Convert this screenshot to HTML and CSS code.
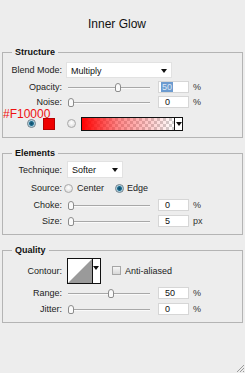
FILE: index.html
```html
<!DOCTYPE html>
<html lang="en">
<head>
    <meta charset="UTF-8">
    <title>Inner Glow</title>
    <link rel="stylesheet" href="styles.css">
</head>
<body>
    <div class="title">Inner Glow</div>

    <fieldset class="group structure">
        <legend>Structure</legend>
        <div class="row r-blend">
            <span class="lbl">Blend Mode:</span>
            <div class="select blend">Multiply<span class="arrow"></span></div>
        </div>
        <div class="row r-opacity">
            <span class="lbl">Opacity:</span>
            <div class="slider"><span class="thumb" style="left:47px"></span></div>
            <div class="num"><span class="hl">50</span></div>
            <span class="unit">%</span>
        </div>
        <div class="row r-noise">
            <span class="lbl">Noise:</span>
            <div class="slider"><span class="thumb" style="left:0px"></span></div>
            <div class="num">0</div>
            <span class="unit">%</span>
        </div>
        <div class="row r-color">
            <span class="radio on first"></span>
            <span class="swatch"></span>
            <span class="radio second"></span>
            <span class="gradient"></span><span class="drop"><span class="arrow"></span></span>
        </div>
    </fieldset>

    <fieldset class="group elements">
        <legend>Elements</legend>
        <div class="row r-tech">
            <span class="lbl">Technique:</span>
            <div class="select tech">Softer<span class="arrow"></span></div>
        </div>
        <div class="row r-source">
            <span class="lbl">Source:</span>
            <span class="radio src1"></span><span class="opt">Center</span>
            <span class="radio on src2"></span><span class="opt edge">Edge</span>
        </div>
        <div class="row r-choke">
            <span class="lbl">Choke:</span>
            <div class="slider"><span class="thumb" style="left:0px"></span></div>
            <div class="num">0</div>
            <span class="unit">%</span>
        </div>
        <div class="row r-size">
            <span class="lbl">Size:</span>
            <div class="slider"><span class="thumb" style="left:0px"></span></div>
            <div class="num">5</div>
            <span class="unit">px</span>
        </div>
    </fieldset>

    <fieldset class="group quality">
        <legend>Quality</legend>
        <div class="row r-contour">
            <span class="lbl">Contour:</span>
            <div class="contour">
                <svg width="24" height="24" viewBox="0 0 24 24"><polygon points="0,24 24,0 24,24" fill="#9a9a9a"/></svg>
                <span class="cdrop"><span class="arrow"></span></span>
            </div>
            <span class="check"></span><span class="opt">Anti-aliased</span>
        </div>
        <div class="row r-range">
            <span class="lbl">Range:</span>
            <div class="slider"><span class="thumb" style="left:40px"></span></div>
            <div class="num">50</div>
            <span class="unit">%</span>
        </div>
        <div class="row r-jitter">
            <span class="lbl">Jitter:</span>
            <div class="slider"><span class="thumb" style="left:0px"></span></div>
            <div class="num">0</div>
            <span class="unit">%</span>
        </div>
    </fieldset>

    <div class="note">#F10000</div>

    <svg class="grip" width="7" height="7" viewBox="0 0 7 7">
        <path d="M7 0 L0 7 M7 3 L3 7 M7 6 L6 7" stroke="#9a9a9a" stroke-width="1"/>
    </svg>
</body>
</html>
```

FILE: styles.css
```css
* { box-sizing: border-box; }
body {
    margin: 0;
    width: 245px;
    height: 373px;
    overflow: hidden;
    position: relative;
    background: #ededed;
    font-family: "Liberation Sans", Arial, sans-serif;
    font-size: 9px;
    color: #222;
}
.title {
    height: 47px;
    padding-top: 17px;
    padding-right: 11px;
    line-height: 14px;
    font-size: 12px;
    text-align: center;
    color: #111;
}

/* group boxes */
.group {
    margin: 0 2px;
    padding: 0;
    border: 1px solid #b4b4b4;
    min-width: 0;
}
.group legend {
    margin-left: 9px;
    padding: 0 3px;
    font-weight: bold;
    font-size: 9px;
    line-height: 10px;
    color: #111;
}
.structure { padding-bottom: 1px; }
.elements { margin-top: 10px; padding-bottom: 5px; }
.quality { margin-top: 10px; padding-bottom: 5px; }

.row {
    display: flex;
    align-items: center;
}
.lbl {
    width: 59px;
    line-height: 8px;
    text-align: right;
    flex: none;
}
.r-blend { margin-top: 4px; height: 18px; }
.r-opacity { height: 16px; }
.r-noise { height: 14px; }
.r-color { height: 27px; padding-top: 2px; }
.r-tech { margin-top: 2px; height: 19px; }
.r-source { height: 18px; }
.r-choke, .r-size { height: 16px; }
.r-contour { margin-top: 2px; height: 27px; }
.r-range { height: 17px; }
.r-jitter { height: 16px; }

/* dropdowns */
.select {
    position: relative;
    height: 16px;
    line-height: 16px;
    padding-left: 4px;
    background: #fff;
    border: 1px solid #e2e2e2;
    color: #111;
}
.select.blend { margin-left: 4px; width: 106px; }
.select.tech { margin-left: 5px; width: 56px; height: 17px; line-height: 17px; }
.arrow {
    position: absolute;
    width: 0;
    height: 0;
    border-left: 3px solid transparent;
    border-right: 3px solid transparent;
    border-top: 4px solid #111;
}
.select .arrow { right: 4px; top: 6px; }

/* sliders */
.slider {
    position: relative;
    margin-left: 6px;
    width: 82px;
    height: 10px;
    flex: none;
}
.slider::before {
    content: "";
    position: absolute;
    left: 0;
    right: 0;
    top: 5px;
    border-top: 1px solid #a8a8a8;
    border-bottom: 1px solid #fafafa;
}
.thumb {
    position: absolute;
    top: 1px;
    width: 6px;
    height: 9px;
    background: #fafafa;
    border: 1px solid #8c8c8c;
    border-radius: 3px 3px 2px 2px;
}
.num {
    margin-left: 8px;
    width: 31px;
    height: 12px;
    line-height: 10px;
    padding-left: 6px;
    background: #fff;
    border: 1px solid #d6d6d6;
    color: #111;
    flex: none;
}
.hl {
    display: inline-block;
    margin-left: -4px;
    padding: 0 1px;
    background: #6c9bd0;
    color: #dfe9f5;
}
.unit { margin-left: 4px; color: #333; }

/* radios and checks */
.radio {
    width: 9px;
    height: 9px;
    border-radius: 50%;
    border: 1px solid #a9a9a9;
    background: radial-gradient(circle at 50% 40%, #fff 0, #d6d6d6 100%);
    flex: none;
}
.radio.on {
    border-color: #6d7f8a;
    background: radial-gradient(circle, #0e4966 0, #1d6a8c 2px, #9fc8da 2.8px, #e4eef2 4px);
}
.radio.first { margin-left: 24px; }
.radio.second { margin-left: 12px; }
.radio.src1 { margin-left: 2px; }
.radio.src2 { margin-left: 11px; }
.opt { margin-left: 4px; color: #222; }
.opt.edge { margin-left: 3px; }
.check {
    margin-left: 11px;
    width: 9px;
    height: 9px;
    border: 1px solid #a6a6a6;
    background: linear-gradient(#f6f6f6, #d8d8d8);
    flex: none;
}

/* colour pickers */
.swatch {
    margin-left: 7px;
    width: 12px;
    height: 12px;
    background: #ee0000;
    border: 1px solid #b30000;
    flex: none;
}
.gradient {
    margin-left: 5px;
    width: 93px;
    height: 14px;
    border: 1px solid #111;
    border-right: none;
    background:
        linear-gradient(to right, #f00 0%, rgba(255, 40, 40, 0.55) 40%, rgba(255, 0, 0, 0) 100%),
        repeating-conic-gradient(#d0d0d0 0 25%, #fff 0 50%) 0 0 / 6px 6px;
    flex: none;
}
.drop {
    position: relative;
    width: 9px;
    height: 14px;
    background: #fff;
    border: 1px solid #111;
    flex: none;
}
.drop .arrow { left: 1px; top: 4px; }

/* contour */
.contour {
    display: flex;
    margin-left: 5px;
    width: 34px;
    height: 26px;
    border: 1px solid #111;
    background: #fff;
    flex: none;
}
.contour svg { display: block; }
.cdrop {
    position: relative;
    width: 8px;
    border-left: 1px solid #111;
}
.cdrop .arrow { left: 0; top: 7px; }

.note {
    position: absolute;
    left: 3px;
    top: 110px;
    font-size: 12px;
    line-height: 9px;
    color: #ee1111;
}
.grip {
    position: absolute;
    right: 1px;
    bottom: 1px;
}
```
